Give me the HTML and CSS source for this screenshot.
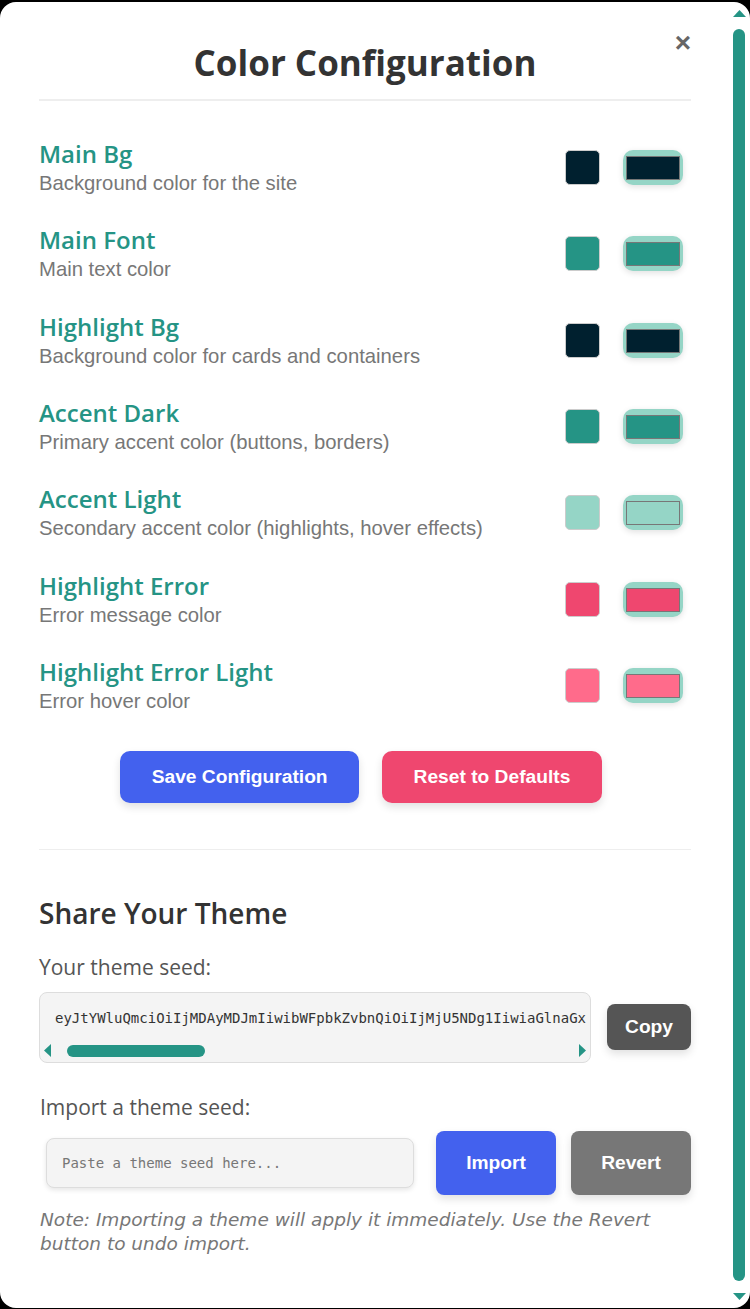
FILE: index.html
```html
<!DOCTYPE html>
<html lang="en">
<head>
<meta charset="utf-8">
<title>Color Configuration</title>
<link rel="stylesheet" href="styles.css">
</head>
<body>
<div class="modal">
  <div class="content">
    <button class="close" type="button" aria-label="Close">×</button>
    <h1 class="title">Color Configuration</h1>

    <div class="rows">
      <div class="row">
        <div class="info"><div class="name">Main Bg</div><div class="desc">Background color for the site</div></div>
        <div class="controls"><span class="swatch" style="background:#00202f"></span><input class="picker" type="color" value="#00202f"></div>
      </div>
      <div class="row">
        <div class="info"><div class="name">Main Font</div><div class="desc">Main text color</div></div>
        <div class="controls"><span class="swatch" style="background:#259485"></span><input class="picker" type="color" value="#259485"></div>
      </div>
      <div class="row">
        <div class="info"><div class="name">Highlight Bg</div><div class="desc">Background color for cards and containers</div></div>
        <div class="controls"><span class="swatch" style="background:#00202f"></span><input class="picker" type="color" value="#00202f"></div>
      </div>
      <div class="row">
        <div class="info"><div class="name">Accent Dark</div><div class="desc">Primary accent color (buttons, borders)</div></div>
        <div class="controls"><span class="swatch" style="background:#259485"></span><input class="picker" type="color" value="#259485"></div>
      </div>
      <div class="row">
        <div class="info"><div class="name">Accent Light</div><div class="desc">Secondary accent color (highlights, hover effects)</div></div>
        <div class="controls"><span class="swatch" style="background:#95d5c6"></span><input class="picker" type="color" value="#95d5c6"></div>
      </div>
      <div class="row">
        <div class="info"><div class="name">Highlight Error</div><div class="desc">Error message color</div></div>
        <div class="controls"><span class="swatch" style="background:#ef476f"></span><input class="picker" type="color" value="#ef476f"></div>
      </div>
      <div class="row">
        <div class="info"><div class="name">Highlight Error Light</div><div class="desc">Error hover color</div></div>
        <div class="controls"><span class="swatch" style="background:#ff6b8b"></span><input class="picker" type="color" value="#ff6b8b"></div>
      </div>
    </div>

    <div class="actions">
      <button class="btn btn-blue btn-wide" type="button">Save Configuration</button>
      <button class="btn btn-pink btn-wide" type="button">Reset to Defaults</button>
    </div>

    <hr class="sep">

    <h2 class="share-title">Share Your Theme</h2>
    <div class="field-label">Your theme seed:</div>
    <div class="seed-row">
      <div class="seed-box">
        <div class="seed-text">eyJtYWluQmciOiIjMDAyMDJmIiwibWFpbkZvbnQiOiIjMjU5NDg1IiwiaGlnaGx</div>
        <div class="hscroll">
          <svg class="arrow" viewBox="0 0 15 15" width="15" height="15"><path d="M11 1L11 14L4 7.5Z" fill="#259485"/></svg>
          <div class="htrack"><div class="hthumb"></div></div>
          <svg class="arrow" viewBox="0 0 15 15" width="15" height="15"><path d="M4 1L4 14L11 7.5Z" fill="#259485"/></svg>
        </div>
      </div>
      <button class="btn btn-dark" type="button">Copy</button>
    </div>

    <div class="field-label import-label">Import a theme seed:</div>
    <div class="import-row">
      <input class="seed-input" type="text" placeholder="Paste a theme seed here...">
      <button class="btn btn-blue btn-fixed" type="button">Import</button>
      <button class="btn btn-grey btn-fixed" type="button">Revert</button>
    </div>
    <p class="note">Note: Importing a theme will apply it immediately. Use the Revert button to undo import.</p>
  </div>

  <div class="vscroll" aria-hidden="true">
    <svg class="arrow" viewBox="0 0 15 15" width="15" height="15"><path d="M1 12L7.5 5L14 12Z" fill="#259485"/></svg>
    <div class="vtrack"><div class="vthumb"></div></div>
    <svg class="arrow" viewBox="0 0 15 15" width="15" height="15"><path d="M1 3L14 3L7.5 10Z" fill="#259485"/></svg>
  </div>
</div>
</body>
</html>
```

FILE: styles.css
```css
* { box-sizing: border-box; }

html, body {
  margin: 0;
  padding: 0;
  background: #000;
  height: 100%;
  overflow: hidden;
}

.modal {
  position: relative;
  margin: 2px 0 0 0;
  width: 750px;
  height: 1306px;
  background: #fff;
  border: 3px solid #fff;
  border-radius: 16px;
  overflow: hidden;
  display: flex;
  font-family: "Open Sans", "DejaVu Sans", sans-serif;
}

.content {
  flex: 1;
  min-width: 0;
  overflow: hidden;
  padding: 37px 41px 60px 36px;
  display: flex;
  flex-direction: column;
}

/* drawn vertical scrollbar */
.vscroll {
  width: 15px;
  flex: none;
  display: flex;
  flex-direction: column;
}

.arrow { display: block; flex: none; }

.vtrack {
  flex: 1;
  display: flex;
  padding: 9px 2px 9px 1px;
}

.vthumb {
  flex: 1;
  background: #259485;
  border-radius: 6px;
}

.close {
  position: absolute;
  top: 22px;
  right: 56px;
  background: none;
  border: none;
  padding: 0;
  font-family: "Liberation Sans", Arial, sans-serif;
  font-size: 28px;
  font-weight: 700;
  line-height: 32px;
  color: #666;
  cursor: pointer;
}

.title {
  margin: 0 0 39px;
  padding-bottom: 15px;
  border-bottom: 2px solid #eee;
  text-align: center;
  font-size: 35px;
  line-height: 42px;
  font-weight: 700;
  color: #333;
}

.rows {
  display: flex;
  flex-direction: column;
  gap: 31.33px;
}

.row {
  display: flex;
  align-items: center;
  justify-content: space-between;
}

.name {
  font-size: 24px;
  line-height: 28px;
  font-weight: 600;
  color: #259485;
}

.desc {
  margin-top: 3px;
  font-family: "Liberation Sans", Arial, sans-serif;
  font-size: 20.3px;
  line-height: 24px;
  color: #777;
}

.controls {
  display: flex;
  align-items: center;
  gap: 23px;
  padding-right: 8px;
}

.swatch {
  display: block;
  width: 35px;
  height: 35px;
  border: 1px solid #ccc;
  border-radius: 5px;
}

.picker {
  -webkit-appearance: none;
  appearance: none;
  display: block;
  width: 60px;
  height: 35px;
  margin: 0;
  padding: 0;
  border: none;
  border-radius: 10px;
  background: #95d5c6;
  box-shadow: 0 2px 6px rgba(0, 0, 0, 0.12);
  cursor: pointer;
}

.picker::-webkit-color-swatch-wrapper {
  padding: 6px 3px 5px;
}

.picker::-webkit-color-swatch {
  border: 1px solid #777;
  border-radius: 0;
}

.actions {
  margin-top: 38px;
  display: flex;
  justify-content: center;
  gap: 23px;
  padding-right: 8px;
}

.btn {
  border: none;
  border-radius: 10px;
  color: #fff;
  font-family: "Liberation Sans", Arial, sans-serif;
  font-weight: 700;
  font-size: 19.2px;
  line-height: 22px;
  padding: 15px 30px;
  cursor: pointer;
  box-shadow: 0 4px 8px rgba(0, 0, 0, 0.12);
}

.btn-wide { padding: 15px 31.5px; }
.btn-blue { background: #4361ee; }
.btn-pink { background: #ef476f; }
.btn-dark { background: #555; border-radius: 8px; padding: 12px 18px; flex: none; }
.btn-grey { background: #777; }

.sep {
  margin: 46px 0 0;
  border: none;
  border-top: 1px solid #eee;
  height: 0;
}

.share-title {
  margin: 46px 0 0;
  font-size: 28px;
  line-height: 34px;
  font-weight: 600;
  color: #333;
}

.field-label {
  margin-top: 23px;
  font-size: 21px;
  line-height: 28px;
  color: #555;
}

.seed-row {
  margin-top: 11px;
  display: flex;
  align-items: center;
  gap: 16px;
}

.seed-box {
  flex: 1;
  min-width: 0;
  background: #f4f4f4;
  border: 1px solid #ddd;
  border-radius: 8px;
  padding-bottom: 4px;
  overflow: hidden;
}

.seed-text {
  overflow: hidden;
  white-space: nowrap;
  padding: 15px 0 15px 15px;
  font-family: "DejaVu Sans Mono", "Liberation Mono", monospace;
  font-size: 14px;
  line-height: 20px;
  color: #333;
}

/* drawn horizontal scrollbar */
.hscroll {
  display: flex;
  height: 15px;
}

.htrack {
  flex: 1;
  padding: 2px 0 1px 12px;
}

.hthumb {
  width: 138px;
  height: 100%;
  background: #259485;
  border-radius: 6px;
}

.import-label {
  margin-top: 30px;
  padding-left: 1px;
}

.import-row {
  margin-top: 10px;
  display: flex;
  align-items: stretch;
  gap: 15px;
}

.seed-input {
  flex: 1;
  min-width: 0;
  height: 50px;
  margin: 7px;
  padding: 0 15px;
  background: #f4f4f4;
  border: 1px solid #ddd;
  border-radius: 8px;
  box-shadow: 0 2px 5px rgba(0, 0, 0, 0.1);
  font-family: "DejaVu Sans Mono", "Liberation Mono", monospace;
  font-size: 14px;
  color: #333;
  outline: none;
}

.seed-input::placeholder { color: #777; }

.btn-fixed {
  width: 120px;
  padding: 0;
  border-radius: 8px;
}

.note {
  margin: 13px 0 0;
  padding-left: 1px;
  font-family: "DejaVu Sans", "Open Sans", sans-serif;
  font-size: 18.5px;
  line-height: 24px;
  font-style: italic;
  color: #777;
}
```
